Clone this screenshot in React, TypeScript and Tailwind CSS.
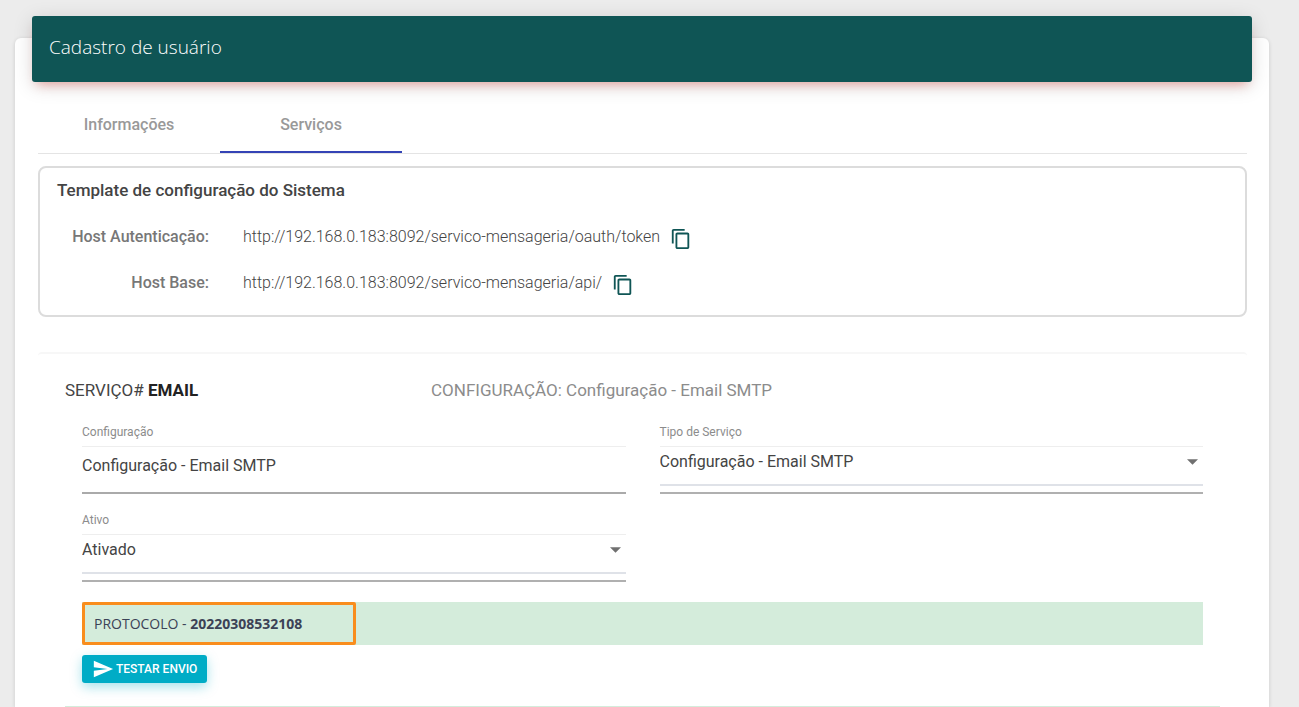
import { useState } from "react";

interface HostRowProps {
  label: string;
  url: string;
}

const CopyIcon = () => (
  <svg viewBox="0 0 24 24" className="size-[22px] fill-[#0f5555]">
    <path d="M16 1H4c-1.1 0-2 .9-2 2v14h2V3h12V1zm3 4H8c-1.1 0-2 .9-2 2v14c0 1.1.9 2 2 2h11c1.1 0 2-.9 2-2V7c0-1.1-.9-2-2-2zm0 16H8V7h11v14z" />
  </svg>
);

const HostRow = ({ label, url }: HostRowProps) => (
  <div className="flex h-[46px] items-center">
    <dt className="w-[169px] shrink-0 text-right font-medium text-[#777]">{label}</dt>
    <dd className="flex items-center pl-[34px] font-light text-[#444]">
      {url}
      <button
        type="button"
        aria-label={`Copiar ${label}`}
        className="ml-[10px] pt-[3px]"
        onClick={() => navigator.clipboard?.writeText(url)}
      >
        <CopyIcon />
      </button>
    </dd>
  </div>
);

const SelectField = ({ id, label, options }: {
  id: string;
  label: string;
  options: string[];
}) => (
  <div>
    <label htmlFor={id} className="block text-xs leading-4 text-[#8c8c8c]">
      {label}
    </label>
    <div className="mt-[6px] border-b-2 border-[#b0b0b0] pb-[6px]">
      <div className="relative">
        <select
          id={id}
          className="block h-10 w-full appearance-none border-t border-b-2 border-t-[#eee] border-b-[#dfe2e8] bg-white pb-2 text-base text-[#444] outline-none"
        >
          {options.map((option) => (
            <option key={option}>{option}</option>
          ))}
        </select>
        <svg viewBox="0 0 10 5" className="pointer-events-none absolute top-[13px] right-[5px] h-[6px] w-[11px] fill-[#707070]">
          <path d="M0 0h10L5 5z" />
        </svg>
      </div>
    </div>
  </div>
);

const TABS = ["Informações", "Serviços"];

export default function App() {
  const [activeTab, setActiveTab] = useState("Serviços");
  const [config, setConfig] = useState("Configuração - Email SMTP");

  return (
    <div className="flex min-h-screen flex-col bg-[#ececec] pt-[38px] pr-[30px] pl-[15px] font-['Roboto',sans-serif] text-base leading-6">
      <main className="flex-1 rounded-t-md bg-white shadow-[0_1px_4px_rgba(0,0,0,0.14)]">
        <header className="mx-[17px] -mt-[22px] flex h-[66px] items-center rounded-[3px] bg-[#0f5555] px-[17px] shadow-[0_4px_20px_rgba(0,0,0,0.14),0_7px_10px_-5px_rgba(244,67,54,0.4)]">
          <h1 className="pb-1 font-['Open_Sans',sans-serif] text-[19px] font-light text-white">
            Cadastro de usuário
          </h1>
        </header>

        <div className="pt-4 pr-[22px] pl-[23px]">
          {/* Tabs */}
          <div role="tablist" className="flex h-14 border-b border-[#e4e4e4]">
            {TABS.map((tab) => (
              <button
                key={tab}
                type="button"
                role="tab"
                aria-selected={tab === activeTab}
                onClick={() => setActiveTab(tab)}
                className={`w-[182px] border-b-2 font-medium text-[#999] ${tab === activeTab ? "border-[#3443b5]" : "border-transparent"}`}
              >
                {tab}
              </button>
            ))}
          </div>

          {/* System configuration */}
          <section className="mt-3 rounded-lg border-2 border-[#dcdcdc] pt-[10px] pb-[9px]">
            <h2 className="pl-[17px] text-[17px] font-medium text-[#444]">Template de configuração do Sistema</h2>
            <dl className="pt-3">
              <HostRow label="Host Autenticação:" url="http://192.168.0.183:8092/servico-mensageria/oauth/token" />
              <HostRow label="Host Base:" url="http://192.168.0.183:8092/servico-mensageria/api/" />
            </dl>
          </section>

          {/* Service */}
          <section className="mt-[35px] rounded-t border-t-2 border-[#f7f7f7] px-[27px] pt-6">
            <div className="flex text-[17px]">
              <h3 className="w-[366px] text-[#444]">
                SERVIÇO# <strong className="font-bold text-[#222]">EMAIL</strong>
              </h3>
              <p className="text-[#8c8c8c]">CONFIGURAÇÃO: Configuração - Email SMTP</p>
            </div>

            <div className="px-[17px] pt-[22px]">
              <form className="grid grid-cols-2 gap-x-[34px] gap-y-[18px]">
                <div>
                  <label htmlFor="config" className="block text-xs leading-4 text-[#8c8c8c]">
                    Configuração
                  </label>
                  <input
                    id="config"
                    type="text"
                    value={config}
                    onChange={(e) => setConfig(e.target.value)}
                    className="mt-[6px] block h-12 w-full border-t border-b-2 border-t-[#eee] border-b-[#aaa] pb-2 text-[#444] outline-none"
                  />
                </div>
                <SelectField id="tipo" label="Tipo de Serviço" options={["Configuração - Email SMTP"]} />
                <SelectField id="ativo" label="Ativo" options={["Ativado", "Desativado"]} />
              </form>

              <div className="mt-5 bg-[#d4ecdb]">
                <p className="flex h-[43px] w-[274px] items-center rounded-[2px] border-[3px] border-[#f98d1d] pl-[9px] font-['Open_Sans',sans-serif] text-sm text-[#3b4256]">
                  <span className="font-medium whitespace-pre">PROTOCOLO - </span>
                  <strong className="font-bold">20220308532108</strong>
                </p>
              </div>

              <button
                type="button"
                className="mt-[10px] flex h-7 items-center rounded-[3px] bg-[#00acc6] px-[10px] text-xs font-medium text-white shadow-[0_4px_12px_rgba(0,172,198,0.35)]"
              >
                <svg viewBox="0 0 24 24" className="mr-[2px] size-[22px] fill-white">
                  <path d="M2.01 21L23 12 2.01 3 2 10l15 2-15 2z" />
                </svg>
                TESTAR ENVIO
              </button>
            </div>

            <div className="mt-[23px] h-px bg-[#d4ecdb]" />
          </section>
        </div>
      </main>
    </div>
  );
}
